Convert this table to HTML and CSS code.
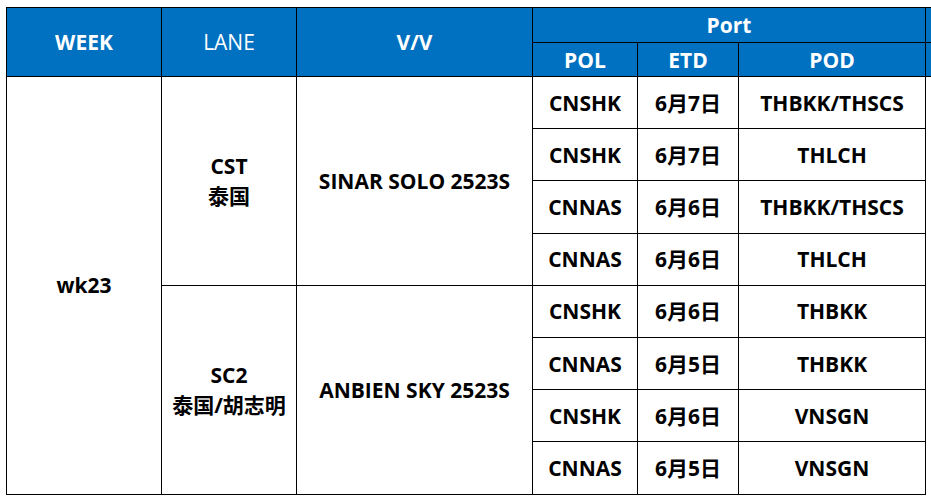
FILE: index.html
```html
<!DOCTYPE html>
<html>
<head>
<meta charset="utf-8">
<link rel="stylesheet" href="styles.css">
</head>
<body>
<table class="sched">
  <colgroup>
    <col class="c-week"><col class="c-lane"><col class="c-vv"><col class="c-pol"><col class="c-etd"><col class="c-pod"><col class="c-extra">
  </colgroup>
  <thead>
    <tr class="h1">
      <th rowspan="2">WEEK</th>
      <th rowspan="2" class="light">LANE</th>
      <th rowspan="2">V/V</th>
      <th colspan="3">Port</th>
      <th class="extra-h"></th>
    </tr>
    <tr class="h2">
      <th>POL</th>
      <th>ETD</th>
      <th>POD</th>
      <th class="extra-h"></th>
    </tr>
  </thead>
  <tbody>
    <tr>
      <td rowspan="8">wk23</td>
      <td rowspan="4">CST<br>泰国</td>
      <td rowspan="4">SINAR SOLO 2523S</td>
      <td>CNSHK</td><td>6月7日</td><td>THBKK/THSCS</td><td class="extra"></td>
    </tr>
    <tr><td>CNSHK</td><td>6月7日</td><td>THLCH</td><td class="extra"></td></tr>
    <tr><td>CNNAS</td><td>6月6日</td><td>THBKK/THSCS</td><td class="extra"></td></tr>
    <tr><td>CNNAS</td><td>6月6日</td><td>THLCH</td><td class="extra"></td></tr>
    <tr>
      <td rowspan="4">SC2<br>泰国/胡志明</td>
      <td rowspan="4">ANBIEN SKY 2523S</td>
      <td>CNSHK</td><td>6月6日</td><td>THBKK</td><td class="extra"></td>
    </tr>
    <tr><td>CNNAS</td><td>6月5日</td><td>THBKK</td><td class="extra"></td></tr>
    <tr><td>CNSHK</td><td>6月6日</td><td>VNSGN</td><td class="extra"></td></tr>
    <tr><td>CNNAS</td><td>6月5日</td><td>VNSGN</td><td class="extra"></td></tr>
  </tbody>
</table>
</body>
</html>
```
FILE: styles.css
```css
html, body {
  margin: 0;
  padding: 0;
  background: #fff;
  overflow: hidden;
}
body {
  width: 931px;
  height: 501px;
}
.sched {
  margin: 7px 0 0 6px;
  border-collapse: collapse;
  table-layout: fixed;
  width: 1020px;
  font-family: "Open Sans", "Noto Sans CJK SC", sans-serif;
  font-weight: 700;
  font-size: 21px;
  color: #000;
}
.c-week { width: 155px; }
.c-lane { width: 135px; }
.c-vv { width: 236px; }
.c-pol { width: 105px; }
.c-etd { width: 101px; }
.c-pod { width: 187px; }
.c-extra { width: 101px; }
.sched th, .sched td {
  border: 1px solid #000;
  text-align: center;
  vertical-align: middle;
  padding: 0;
}
.sched th {
  background: #0070c0;
  color: #fff;
  font-weight: 700;
  line-height: 26px;
}
.sched th.light {
  font-weight: 400;
}
.h1 th { height: 34px; }
.h2 th { height: 33px; }
.sched td {
  height: 51.2px;
  line-height: 30px;
}
.sched td.extra {
  border-top: none;
  border-bottom: none;
  border-right: none;
}
```
